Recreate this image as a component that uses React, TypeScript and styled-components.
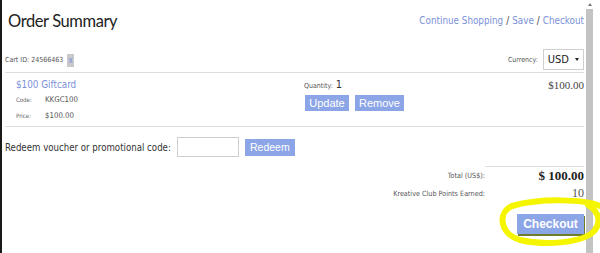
import React from "react";
import styled, { createGlobalStyle } from "styled-components";

const GlobalStyle = createGlobalStyle`
  html, body {
    margin: 0;
    padding: 0;
    background: #ffffff;
    overflow: hidden;
  }
`;

const tahoma = `"DejaVu Sans Condensed", "DejaVu Sans", sans-serif`;
const serif = `"Liberation Serif", "Times New Roman", serif`;
const linkBlue = "#7b91d8";
const buttonBlue = "#8ca5e6";

// whole window: left frame edge, page, scrollbar
const Page = styled.div`
  position: relative;
  display: flex;
  width: 600px;
  height: 253px;
  overflow: hidden;
  background: #fff;
`;

const FrameEdge = styled.div`
  width: 2px;
  flex: none;
  background: #1a1a1a;
`;

const Main = styled.main`
  width: 579px;
  flex: none;
  padding: 0 0 0 3px;
  display: flex;
  flex-direction: column;
`;

const ScrollBar = styled.div`
  flex: none;
  width: 16px;
  display: flex;
  flex-direction: column;
  align-items: flex-start;
  padding-left: 2px;
`;

const ScrollArrow = styled.div`
  width: 0;
  height: 0;
  margin: 3px 0 0 2px;
  border-left: 2px solid transparent;
  border-right: 2px solid transparent;
  border-bottom: 3px solid #777;
`;

const ScrollThumb = styled.div`
  width: 7px;
  flex: 1;
  margin-top: 3px;
  background: #c3c3c3;
`;

// header with title and links
const Header = styled.div`
  display: flex;
  justify-content: space-between;
  align-items: flex-start;
  height: 46px;
`;

const Title = styled.h1`
  margin: 11px 0 0 3px;
  font-family: Lato, "Open Sans", sans-serif;
  font-weight: 400;
  font-size: 16.5px;
  letter-spacing: -0.4px;
  line-height: 20px;
  color: #222;
`;

const Links = styled.div`
  margin-top: 14px;
  font-family: ${tahoma};
  font-stretch: semi-condensed;
  font-size: 9.8px;
  line-height: 13px;
  color: #333;
`;

const Link = styled.a`
  color: ${linkBlue};
  text-decoration: none;
`;

const Sep = styled.span`
  margin: 0 3px;
  color: #444;
`;

// cart id / currency bar
const Bar = styled.div`
  display: flex;
  justify-content: space-between;
  align-items: center;
  height: 26px;
  border-bottom: 1px solid #dedede;
`;

const Small = styled.span<{ $size?: number }>`
  font-family: ${tahoma};
  font-stretch: semi-condensed;
  font-size: ${(p) => p.$size ?? 7}px;
  color: #555;
`;

const CartId = styled.div`
  display: flex;
  align-items: center;
  gap: 4px;
  margin-top: 2px;
`;

const XTag = styled.span`
  display: inline-flex;
  align-items: center;
  justify-content: center;
  width: 7px;
  height: 13px;
  background: #c9c9cd;
  color: ${linkBlue};
  font-family: ${tahoma};
  font-size: 8px;
`;

const Currency = styled.div`
  display: flex;
  align-items: center;
  gap: 5px;
  margin-top: 1px;
`;

const Select = styled.div`
  display: flex;
  align-items: center;
  gap: 6px;
  height: 19px;
  padding: 0 4px 0 4px;
  border: 1px solid #cfcfcf;
  font-family: ${tahoma};
  font-stretch: semi-condensed;
  font-size: 11px;
  color: #222;
`;

const Caret = styled.span`
  width: 0;
  height: 0;
  border-left: 2px solid transparent;
  border-right: 2px solid transparent;
  border-top: 3px solid #222;
`;

// cart item
const ItemRow = styled.div`
  display: flex;
  height: 54px;
  border-bottom: 1px solid #dedede;
  padding-top: 5px;
  box-sizing: border-box;
`;

const ItemInfo = styled.div`
  width: 288px;
  padding-left: 11px;
  display: flex;
  flex-direction: column;
`;

const ItemName = styled.a`
  font-family: ${tahoma};
  font-stretch: semi-condensed;
  font-size: 9.8px;
  line-height: 14px;
  color: ${linkBlue};
  text-decoration: none;
`;

const Detail = styled.div`
  display: flex;
  align-items: baseline;
  height: 16px;
  line-height: 16px;
`;

const DetailLabel = styled.span`
  width: 29px;
  font-family: ${tahoma};
  font-stretch: semi-condensed;
  font-size: 6px;
  color: #666;
`;

const DetailValue = styled.span`
  font-family: ${tahoma};
  font-stretch: semi-condensed;
  font-size: 7.8px;
  color: #555;
`;

const ItemQty = styled.div`
  flex: 1;
  display: flex;
  flex-direction: column;
  gap: 2px;
`;

const Qty = styled.div`
  display: flex;
  align-items: baseline;
  gap: 3px;
  line-height: 14px;
`;

const QtyValue = styled.span`
  font-family: ${tahoma};
  font-size: 11px;
  color: #333;
`;

const Buttons = styled.div`
  display: flex;
  gap: 6px;
  margin-left: 1px;
`;

const Button = styled.button<{ $w: number; $h?: number; $size?: number; $bold?: boolean }>`
  width: ${(p) => p.$w}px;
  height: ${(p) => p.$h ?? 16}px;
  padding: 0;
  border: none;
  background: ${buttonBlue};
  color: #fff;
  font-family: "Liberation Sans", Arial, sans-serif;
  font-size: ${(p) => p.$size ?? 11}px;
  font-weight: ${(p) => (p.$bold ? 700 : 400)};
  line-height: 1;
`;

const Price = styled.div`
  font-family: ${serif};
  font-size: 11px;
  line-height: 14px;
  color: #444;
`;

// voucher
const RedeemRow = styled.div`
  display: flex;
  align-items: center;
  gap: 6px;
  margin-top: 10px;
  height: 20px;
`;

const RedeemLabel = styled.span`
  font-family: ${tahoma};
  font-stretch: semi-condensed;
  font-size: 9.6px;
  color: #333;
`;

const VoucherInput = styled.div`
  width: 60px;
  height: 18px;
  border: 1px solid #cfcfcf;
`;

// totals
const Totals = styled.div`
  display: flex;
  flex-direction: column;
  align-items: flex-end;
  margin-top: 9px;
`;

const TotalLine = styled.div`
  display: flex;
  align-items: center;
  height: 18px;
`;

const TotalLabel = styled.span`
  width: 200px;
  text-align: right;
  font-family: ${tahoma};
  font-stretch: semi-condensed;
  font-size: 7.2px;
  color: #555;
`;

const TotalValue = styled.span<{ $bold?: boolean; $rule?: boolean }>`
  width: 99px;
  text-align: right;
  font-family: ${serif};
  font-size: ${(p) => (p.$bold ? 13 : 12)}px;
  font-weight: ${(p) => (p.$bold ? 700 : 400)};
  color: ${(p) => (p.$bold ? "#222" : "#555")};
  border-top: ${(p) => (p.$rule ? "1px solid #dedede" : "none")};
  line-height: 18px;
`;

const CheckoutWrap = styled.div`
  margin-top: 12px;
  box-shadow: 1px 2px 0 #6f7d2a;
`;

const Highlight = styled.svg`
  position: absolute;
  left: 0;
  top: 0;
  pointer-events: none;
`;

export default function App() {
  return (
    <>
      <GlobalStyle />
      <Page>
        <FrameEdge />
        <Main>
          <Header>
            <Title>Order Summary</Title>
            <Links>
              <Link href="#">Continue Shopping</Link>
              <Sep>/</Sep>
              <Link href="#">Save</Link>
              <Sep>/</Sep>
              <Link href="#">Checkout</Link>
            </Links>
          </Header>

          <Bar>
            <CartId>
              <Small $size={7}>Cart ID: 24566463</Small>
              <XTag>x</XTag>
            </CartId>
            <Currency>
              <Small $size={7}>Currency:</Small>
              <Select>
                USD <Caret />
              </Select>
            </Currency>
          </Bar>

          <ItemRow>
            <ItemInfo>
              <ItemName href="#">$100 Giftcard</ItemName>
              <Detail>
                <DetailLabel>Code:</DetailLabel>
                <DetailValue>KKGC100</DetailValue>
              </Detail>
              <Detail>
                <DetailLabel>Price:</DetailLabel>
                <DetailValue>$100.00</DetailValue>
              </Detail>
            </ItemInfo>
            <ItemQty>
              <Qty>
                <Small $size={7}>Quantity:</Small>
                <QtyValue>1</QtyValue>
              </Qty>
              <Buttons>
                <Button $w={44}>Update</Button>
                <Button $w={49}>Remove</Button>
              </Buttons>
            </ItemQty>
            <Price>$100.00</Price>
          </ItemRow>

          <RedeemRow>
            <RedeemLabel>Redeem voucher or promotional code:</RedeemLabel>
            <VoucherInput />
            <Button $w={50} $h={17} $size={10.5}>
              Redeem
            </Button>
          </RedeemRow>

          <Totals>
            <TotalLine>
              <TotalLabel>Total (US$):</TotalLabel>
              <TotalValue $bold $rule>
                $ 100.00
              </TotalValue>
            </TotalLine>
            <TotalLine>
              <TotalLabel>Kreative Club Points Earned:</TotalLabel>
              <TotalValue>10</TotalValue>
            </TotalLine>
            <CheckoutWrap>
              <Button $w={67} $h={20} $size={12} $bold>
                Checkout
              </Button>
            </CheckoutWrap>
          </Totals>
        </Main>
        <ScrollBar>
          <ScrollArrow />
          <ScrollThumb />
        </ScrollBar>

        <Highlight width="600" height="253" viewBox="0 0 600 253">
          <path
            d="M600 206 C 585 199, 540 198, 512 206 C 497 213, 500 234, 520 240 C 545 246, 585 243, 595 230 C 602 221, 598 211, 588 205"
            fill="none"
            stroke="#f5f500"
            strokeWidth="6"
            strokeLinecap="round"
          />
        </Highlight>
      </Page>
    </>
  );
}
